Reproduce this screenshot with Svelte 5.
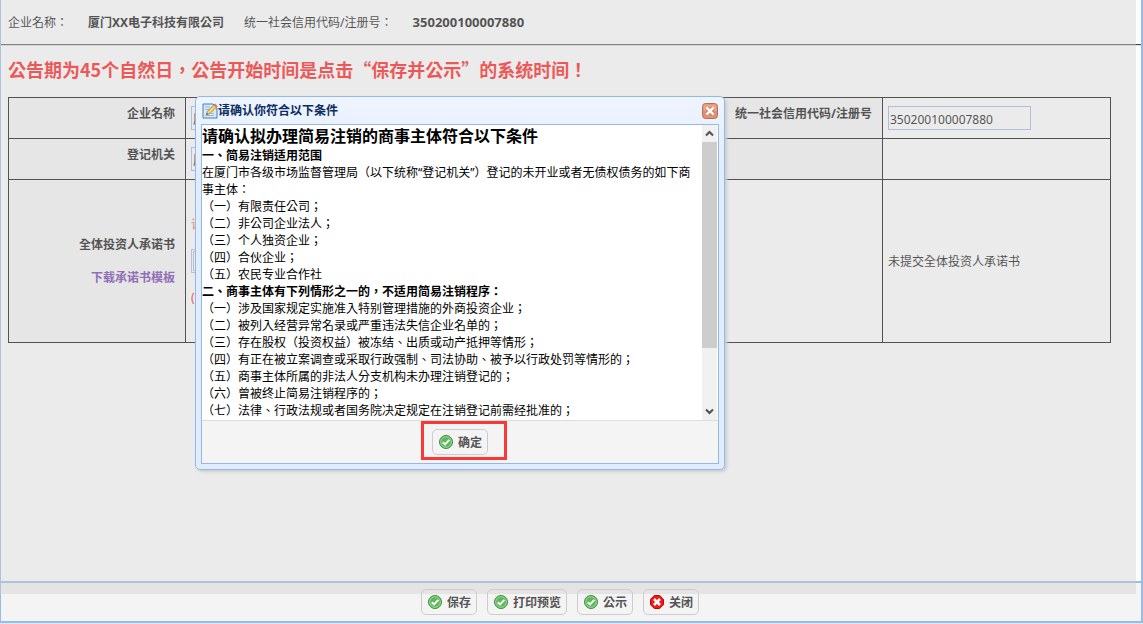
<script lang="ts">
	type Action = { label: string; icon: 'ok' | 'cancel' };

	const companyName = '厦门XX电子科技有限公司';
	const creditCode = '350200100007880';

	const actions: Action[] = [
		{ label: '保存', icon: 'ok' },
		{ label: '打印预览', icon: 'ok' },
		{ label: '公示', icon: 'ok' },
		{ label: '关闭', icon: 'cancel' }
	];

	const scope = ['有限责任公司；', '非公司企业法人；', '个人独资企业；', '合伙企业；', '农民专业合作社'];

	const exclusions = [
		'涉及国家规定实施准入特别管理措施的外商投资企业；',
		'被列入经营异常名录或严重违法失信企业名单的；',
		'存在股权（投资权益）被冻结、出质或动产抵押等情形；',
		'有正在被立案调查或采取行政强制、司法协助、被予以行政处罚等情形的；',
		'商事主体所属的非法人分支机构未办理注销登记的；',
		'曾被终止简易注销程序的；',
		'法律、行政法规或者国务院决定规定在注销登记前需经批准的；'
	];

	const numerals = '一二三四五六七';

	let open = $state(true);
</script>

{#snippet icon(name: Action['icon'])}
	<svg class="icon" viewBox="0 0 14 14" aria-hidden="true">
		{#if name === 'ok'}
			<circle cx="7" cy="7" r="6.5" fill="#5cb85a" stroke="#3f8f3e" />
			<circle cx="7" cy="7" r="5.3" fill="none" stroke="#a9dba6" stroke-width="0.9" />
			<path d="M3.8 7.2 6.1 9.4 10.3 4.8" fill="none" stroke="#fff" stroke-width="2" />
		{:else}
			<path d="M4.3.5h5.4l3.8 3.8v5.4l-3.8 3.8H4.3L.5 9.7V4.3z" fill="#f01818" stroke="#b80808" />
			<path d="M4 4l6 6M10 4l-6 6" stroke="#fff" stroke-width="2.6" />
		{/if}
	</svg>
{/snippet}

<div class="page">
	<header class="summary">
		<span>企业名称：</span>
		<strong>{companyName}</strong>
		<span>统一社会信用代码/注册号：</span>
		<strong class="code">{creditCode}</strong>
	</header>

	<main>
		<h1>公告期为45个自然日，公告开始时间是点击“保存并公示”的系统时间！</h1>

		<table>
			<colgroup>
				<col class="col-label" />
				<col />
				<col class="col-label" />
				<col class="col-value" />
			</colgroup>
			<tbody>
				<tr>
					<th><label for="company">企业名称</label></th>
					<td><input id="company" type="text" readonly value={companyName} /></td>
					<th><label for="code">统一社会信用代码/注册号</label></th>
					<td><input id="code" type="text" readonly value={creditCode} /></td>
				</tr>
				<tr>
					<th><label for="authority">登记机关</label></th>
					<td><input id="authority" type="text" readonly value="厦门市" /></td>
					<th></th>
					<td></td>
				</tr>
				<tr class="upload">
					<th>
						<label for="promise">全体投资人承诺书</label>
						<a href="#template">下载承诺书模板</a>
					</th>
					<td colspan="2">
						<p class="tip">请</p>
						<input id="promise" type="text" class="file" />
						<p class="note">(</p>
					</td>
					<td>未提交全体投资人承诺书</td>
				</tr>
			</tbody>
		</table>
	</main>

	<footer class="toolbar">
		{#each actions as action (action.label)}
			<button type="button" class="btn">
				{@render icon(action.icon)}
				{action.label}
			</button>
		{/each}
	</footer>

	{#if open}
		<div class="mask"></div>
		<div class="window" role="dialog" aria-labelledby="window-title">
			<div class="window-head">
				<svg class="edit" viewBox="0 0 16 16" aria-hidden="true">
					<path d="M1 1h10l4 4v10H1z" fill="#d6eafb" stroke="#3f7fc4" />
					<path d="M3 4h5M3 6.500h4M3 12.500h9M9 10.500h3" stroke="#8ebbe6" />
					<path d="M4.500 11.500 5.300 8.500 12 1.800l2.400 2.300-6.700 6.700z" fill="#f7c64a" stroke="#b27a25" stroke-width="0.8" />
					<path d="M6.500 9.600 13.200 3" stroke="#fff0a8" />
					<path d="M12 1.800 13 .8l2.400 2.300-1 1z" fill="#e88a72" stroke="#b96a50" stroke-width="0.600" />
					<path d="M4.200 11.800 4.700 9.900l1.500 1.400z" fill="#444" />
				</svg>
				<h2 id="window-title">请确认你符合以下条件</h2>
				<button type="button" class="close" aria-label="关闭窗口" onclick={() => (open = false)}>
					<svg viewBox="0 0 16 16" aria-hidden="true">
						<rect x="0.5" y="0.5" width="15" height="15" rx="3" fill="#e2906f" stroke="#b8705a" />
						<path d="M1.500 8V3q0-1.500 1.500-1.500h10q1.500 0 1.500 1.500v5z" fill="#eba486" />
						<path d="M4.800 4.800l6.400 6.400M11.200 4.800l-6.400 6.400" stroke="#c0604a" stroke-width="4" />
						<path d="M4.500 4.500l7 7M11.500 4.500l-7 7" stroke="#fff" stroke-width="2.600" />
					</svg>
				</button>
			</div>

			<div class="window-body">
				<div class="scroll">
					<div class="terms">
						<h3>请确认拟办理简易注销的商事主体符合以下条件</h3>
						<h4>一、简易注销适用范围</h4>
						<p>在厦门市各级市场监督管理局（以下统称“登记机关”）登记的未开业或者无债权债务的如下商事主体：</p>
						{#each scope as item, i}
							<p>（{numerals[i]}）{item}</p>
						{/each}
						<h4>二、商事主体有下列情形之一的，不适用简易注销程序：</h4>
						{#each exclusions as item, i}
							<p>（{numerals[i]}）{item}</p>
						{/each}
					</div>
					<div class="scrollbar" aria-hidden="true">
						<svg viewBox="0 0 15 17"><path d="M4 10.500 7.500 7l3.500 3.500" /></svg>
						<div class="track"><div class="thumb"></div></div>
						<svg viewBox="0 0 15 17"><path d="M4 6.500 7.500 10 11 6.500" /></svg>
					</div>
				</div>
				<div class="window-foot">
					<div class="confirm">
						<button type="button" class="btn" onclick={() => (open = false)}>
							{@render icon('ok')}
							确定
						</button>
						<span class="highlight"></span>
					</div>
				</div>
			</div>
		</div>
	{/if}
</div>

<style>
	:global(body) {
		background: #dfe9f7;
	}

	.page {
		position: relative;
		display: flex;
		flex-direction: column;
		box-sizing: border-box;
		min-height: calc(100vh - 1px);
		border: solid #99bbe8;
		border-width: 0 2px 2px 1px;
		background: #fff;
		color: #000;
		font: 12px/17px 'Noto Sans', 'Noto Sans CJK TC', 'Noto Sans CJK SC', sans-serif;
	}

	h1,
	h2,
	h3,
	h4,
	p {
		margin: 0;
	}

	.summary {
		display: flex;
		align-items: center;
		gap: 20px;
		height: 44px;
		padding-left: 7px;
		border-bottom: 1px solid #4f4f4f;
		box-shadow: 0 1px #ddd;
	}

	.code {
		font-size: 13px;
	}

	main {
		flex: 1;
		padding: 0 30px 0 7px;
	}

	h1 {
		padding: 12px 0 16px;
		color: #ff0a0a;
		font: bold 18px/24px 'Noto Sans CJK TC', 'Noto Sans CJK SC', sans-serif;
	}

	table {
		width: 100%;
		table-layout: fixed;
		border-collapse: collapse;
	}

	.col-label {
		width: 177px;
	}

	.col-value {
		width: 228px;
	}

	th,
	td {
		box-sizing: border-box;
		height: 41px;
		padding: 0 5px;
		border: 1px solid #000;
		text-align: left;
	}

	th {
		padding: 0 10px 10px 0;
		background: #f7f7f7;
		text-align: right;
	}

	input {
		display: block;
		box-sizing: border-box;
		width: 143px;
		height: 24px;
		padding: 2px 0 0 1px;
		border: 1px solid #95b8e7;
		background: transparent;
		color: inherit;
		font: inherit;
	}

	.upload > * {
		height: 163px;
	}

	.upload th {
		padding-bottom: 0;
		line-height: 33px;
	}

	.upload th > * {
		display: block;
	}

	a {
		color: #6a2fa8;
		text-decoration: none;
	}

	.file {
		margin: 16px 0;
		border: 3px double #a5b8d6;
	}

	.tip {
		color: #ff4500;
	}

	.note {
		color: #f00;
	}

	.toolbar {
		display: flex;
		justify-content: center;
		gap: 10px;
		padding: 6px 22px 6px 0;
		border-top: 2px solid #99bbe8;
		background: #f4f4f4;
	}

	.btn {
		display: flex;
		align-items: center;
		gap: 5px;
		height: 26px;
		padding: 0 5px 0 6px;
		border: 1px solid #ccc;
		border-radius: 5px;
		background: transparent;
		color: #555;
		font: inherit;
		font-weight: bold;
	}

	.icon {
		width: 14px;
		height: 14px;
	}

	.mask {
		position: absolute;
		inset: 0 5px 27px -1px;
		background: #ccc;
		opacity: 0.4;
	}

	.window {
		position: absolute;
		top: 96px;
		left: 194px;
		box-sizing: border-box;
		width: 530px;
		padding: 0 5px 5px;
		border: 1px solid #95b8e7;
		border-radius: 5px;
		background: linear-gradient(#eff5ff, #e0ecff 20%);
		box-shadow: 2px 2px 3px #ccc;
		color: #000;
	}

	.window-head {
		display: flex;
		align-items: center;
		height: 27px;
		padding: 0 1px;
	}

	.window-head svg {
		display: block;
		width: 16px;
		height: 16px;
	}

	h2 {
		flex: 1;
		color: #0e2d5f;
		font-size: 12px;
	}

	.close {
		padding: 0;
		border: 0;
		background: none;
	}

	.window-body {
		border: 1px solid #95b8e7;
		background: #fff;
	}

	.scroll {
		display: flex;
		padding-right: 1px;
	}

	.terms {
		flex: 1;
		padding-bottom: 1px;
	}

	h3 {
		font-size: 16px;
		line-height: 22px;
	}

	h4 {
		font-size: 12px;
	}

	.scrollbar {
		display: flex;
		flex-direction: column;
		width: 15px;
		background: #f1f1f1;
	}

	.scrollbar svg {
		height: 17px;
		fill: none;
		stroke: #505050;
		stroke-width: 2;
	}

	.track {
		flex: 1;
	}

	.thumb {
		height: 79%;
		background: #cdcdcd;
	}

	.window-foot {
		display: flex;
		justify-content: center;
		padding: 8px 0;
		border-top: 1px solid #ddd;
		background: #f4f4f4;
	}

	.confirm {
		position: relative;
	}

	.highlight {
		position: absolute;
		inset: -8px -19px -5px -11px;
		border: 3px solid #fb3838;
		pointer-events: none;
	}
</style>
